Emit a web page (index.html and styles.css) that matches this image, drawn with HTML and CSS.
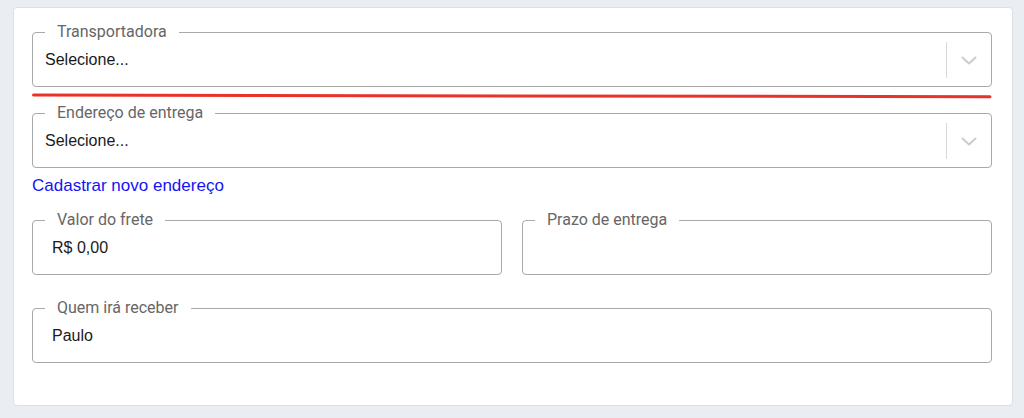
FILE: index.html
```html
<!DOCTYPE html>
<html>
<head>
    <meta charset="UTF-8">
    <title>Entrega</title>
    <link rel="stylesheet" href="styles.css">
</head>
<body>
    <div class="card">
        <fieldset class="field field-select">
            <legend>Transportadora</legend>
            <div class="select-row">
                <span class="value">Selecione...</span>
                <span class="separator"></span>
                <span class="indicator">
                    <svg width="16" height="9" viewBox="0 0 16 9"><polyline points="1.5,1.5 8,7.5 14.5,1.5" fill="none" stroke="#cccccc" stroke-width="2" stroke-linecap="round" stroke-linejoin="round"/></svg>
                </span>
            </div>
        </fieldset>

        <svg class="mark" width="960" height="6" viewBox="0 0 960 6"><line x1="1.5" y1="2" x2="958" y2="3.8" stroke="#e8332a" stroke-width="3" stroke-linecap="round"/></svg>

        <fieldset class="field field-select">
            <legend>Endereço de entrega</legend>
            <div class="select-row">
                <span class="value">Selecione...</span>
                <span class="separator"></span>
                <span class="indicator">
                    <svg width="16" height="9" viewBox="0 0 16 9"><polyline points="1.5,1.5 8,7.5 14.5,1.5" fill="none" stroke="#cccccc" stroke-width="2" stroke-linecap="round" stroke-linejoin="round"/></svg>
                </span>
            </div>
        </fieldset>

        <a class="link" href="#">Cadastrar novo endereço</a>

        <div class="row">
            <fieldset class="field">
                <legend>Valor do frete</legend>
                <div class="input-row">R$ 0,00</div>
            </fieldset>
            <fieldset class="field">
                <legend>Prazo de entrega</legend>
                <div class="input-row"></div>
            </fieldset>
        </div>

        <fieldset class="field field-last">
            <legend>Quem irá receber</legend>
            <div class="input-row">Paulo</div>
        </fieldset>
    </div>
</body>
</html>
```

FILE: styles.css
```css
body {
    margin: 0;
    background-color: #eaedf1;
    font-family: "Liberation Sans", Arial, sans-serif;
}
.card {
    margin: 7px 11px 0 13px;
    padding: 16px 20px 42px 18px;
    background-color: #fff;
    border: 1px solid #dcdfe4;
    border-radius: 4px;
}
.field {
    margin: 0;
    padding: 0 12px 6px 12px;
    border: 1px solid #a9a9a9;
    border-radius: 4px;
    min-width: 0;
}
.field legend {
    padding: 0 12px;
    font-family: Roboto, "Liberation Sans", sans-serif;
    font-size: 16px;
    line-height: 16px;
    color: #666;
}
.field-select {
    padding-right: 0;
}
.select-row {
    display: flex;
    align-items: center;
    height: 40px;
}
.value {
    flex: 1;
    font-size: 16px;
    color: #1a1a1a;
}
.separator {
    width: 1px;
    height: 36px;
    background-color: #d9d9d9;
}
.indicator {
    width: 44px;
    display: flex;
    justify-content: center;
    align-items: center;
}
.indicator svg {
    display: block;
}
.mark {
    display: block;
    margin: 6px 0 6px 0;
}
.link {
    display: block;
    margin-top: 8px;
    line-height: 20px;
    font-size: 17px;
    color: #1414f5;
    text-decoration: none;
}
.row {
    display: grid;
    grid-template-columns: 1fr 1fr;
    gap: 20px;
    margin-top: 16px;
}
.input-row {
    height: 40px;
    padding-left: 7px;
    display: flex;
    align-items: center;
    font-size: 16px;
    color: #1a1a1a;
}
.field-last {
    margin-top: 25px;
}
```
